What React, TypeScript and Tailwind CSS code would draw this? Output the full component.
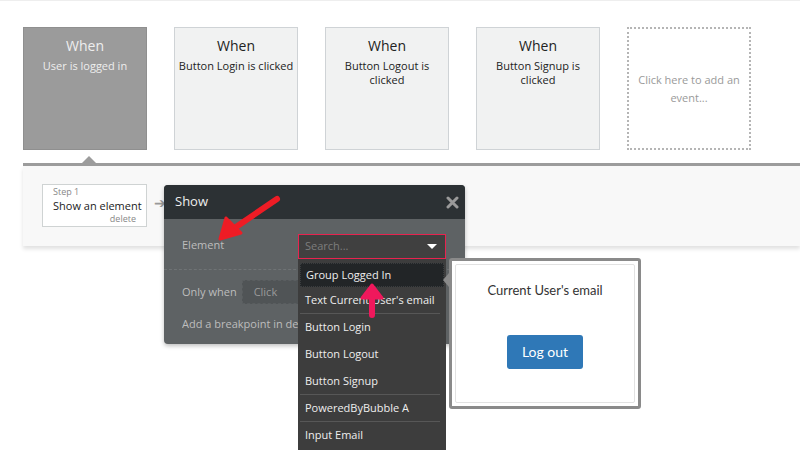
const events = [
  { title: "When", lines: ["Button Login is clicked"] },
  { title: "When", lines: ["Button Logout is", "clicked"] },
  { title: "When", lines: ["Button Signup is", "clicked"] },
];

const elements = [
  { name: "Text Current User's email", divider: true },
  { name: "Button Login" },
  { name: "Button Logout" },
  { name: "Button Signup", divider: true },
  { name: "PoweredByBubble A", divider: true },
  { name: "Input Email" },
];

export default function App() {
  return (
    <div
      className="relative w-[800px] h-[450px] overflow-hidden bg-white border-t border-[#eeeeee]"
      style={{ fontFamily: '"Open Sans", "Noto Sans", sans-serif' }}
    >
      {/* event cards */}
      <div className="flex gap-[27px] pl-[23px] pt-[26px]">
        <div className="w-[124px] h-[123px] bg-[#9b9b9b] border border-[#8f8f8f] flex flex-col items-center pt-[8px] text-[#eeeeee]">
          <div className="text-[14px] leading-[20px]">When</div>
          <div className="text-[11px] leading-[14px] mt-[3px] whitespace-nowrap">User is logged in</div>
        </div>
        {events.map((ev) => (
          <div
            key={ev.lines.join()}
            className="w-[124px] h-[123px] bg-[#f1f2f2] border border-[#cfd3d6] flex flex-col items-center pt-[8px] text-[#222222] text-center"
          >
            <div className="text-[14px] leading-[20px]">{ev.title}</div>
            <div className="text-[11px] leading-[14px] mt-[3px] whitespace-nowrap">
              {ev.lines.map((l) => (
                <div key={l}>{l}</div>
              ))}
            </div>
          </div>
        ))}
        <div className="w-[124px] h-[123px] border-2 border-dotted border-[#b5b5b5] flex items-center justify-center text-center text-[11px] leading-[18px] text-[#9a9a9a]">
          <div>
            Click here to add an
            <br />
            event...
          </div>
        </div>
      </div>

      {/* timeline */}
      <div className="relative ml-[23px] mt-[13px] h-[3px] bg-[#9c9c9c]">
        <div className="absolute left-[59px] -top-[7px] w-0 h-0 border-l-[7px] border-r-[7px] border-b-[7px] border-l-transparent border-r-transparent border-b-[#9c9c9c]" />
      </div>
      <div className="ml-[23px] h-[80px] bg-[#f8f8f8] shadow-[0_3px_4px_rgba(0,0,0,0.12)] flex items-start pt-[18px] pl-[19px]">
        <div className="w-[105px] h-[43px] bg-white border border-[#cfd3d3] px-[10px] pt-[1px] text-[#333] whitespace-nowrap">
          <div className="text-[9px] leading-[12px] text-[#888]">Step 1</div>
          <div className="text-[11px] leading-[15px] text-[#222]">Show an element</div>
          <div className="text-[9px] leading-[12px] text-[#888] text-right">delete</div>
        </div>
        <div className="ml-[7px] mt-[12px] text-[14px] leading-[14px] text-[#999]">➔</div>
      </div>

      {/* Show dialog */}
      <div className="absolute left-[164px] top-[184px] w-[301px] h-[159px] rounded-[4px] overflow-hidden bg-[#5e6264] shadow-[0_2px_4px_rgba(0,0,0,0.25)]">
        <div className="h-[34px] bg-[#2c3134] flex items-center justify-between pl-[11px] pr-[6px]">
          <span className="text-[13px] text-[#eeeeee]">Show</span>
          <svg width="13" height="13" viewBox="0 0 13 13">
            <path d="M2 2 L11 11 M11 2 L2 11" stroke="#9a9a9a" strokeWidth="3" strokeLinecap="round" />
          </svg>
        </div>
        <div className="h-[51px] flex items-center pl-[18px] pt-[2px] border-b border-dashed border-[#6f7375]">
          <span className="text-[11px] text-[#bdbdbd]">Element</span>
        </div>
        <div className="h-[43px] flex items-center pl-[18px] pt-[1px]">
          <span className="text-[11px] text-[#bdbdbd]">Only when</span>
          <div className="ml-[5px] w-[70px] h-[24px] bg-[#505456] flex items-center pl-[11px] text-[11px] text-[#9a9a9a] border border-dashed border-[#5a5e60]">
            Click
          </div>
        </div>
        <div className="pl-[18px] pt-[3px]">
          <div className="w-[116px] overflow-hidden whitespace-nowrap text-[11px] text-[#bdbdbd]">
            Add a breakpoint in debug mode
          </div>
        </div>
      </div>

      {/* search + dropdown */}
      <div className="absolute left-[298px] top-[233px] w-[148px]">
        <div className="h-[25px] bg-[#404040] border border-[#e8234f] flex items-center justify-between pl-[6px] pr-[8px]">
          <span className="text-[11px] text-[#7d7d7d]">Search...</span>
          <div className="w-0 h-0 border-l-[5px] border-r-[5px] border-t-[5px] border-l-transparent border-r-transparent border-t-white" />
        </div>
        <div className="bg-[#3d3d3d] h-[200px] px-[2px] pt-[4px]">
          <div className="h-[24px] bg-[#222527] border border-dotted border-[#3a3d3f] flex items-center pl-[5px] text-[11px] text-[#eeeeee] whitespace-nowrap">
            Group Logged In
          </div>
          {elements.map((el) => (
            <div
              key={el.name}
              className={`h-[27px] flex items-center pl-[5px] text-[11px] text-[#eeeeee] mr-[4px] whitespace-nowrap ${el.divider ? "border-b border-[#575757]" : ""}`}
            >
              {el.name}
            </div>
          ))}
        </div>
      </div>

      {/* element preview popup */}
      <div className="absolute left-[449px] top-[257px] w-[192px] h-[151px] bg-white border-[3px] border-[#8a8a8a] rounded-[3px] p-[3px]">
        <div className="absolute -left-[9px] top-[12px] w-0 h-0 border-t-[7px] border-b-[7px] border-r-[6px] border-t-transparent border-b-transparent border-r-[#8a8a8a]" />
        <div
          className="h-full border border-[#e2e2e2] rounded-[2px] flex flex-col items-center pt-[16px]"
          style={{ fontFamily: 'Lato, "Open Sans", sans-serif' }}
        >
          <div className="text-[13px] text-[#333333]">Current User's email</div>
          <div className="mt-[34px] w-[76px] h-[34px] bg-[#2f78b7] rounded-[3px] flex items-center justify-center text-[14px] text-white">
            Log out
          </div>
        </div>
      </div>

      {/* annotation arrows */}
      <svg className="absolute left-0 top-0 pointer-events-none" width="800" height="450">
        <path d="M277 198 L236 226" stroke="#ee1c25" strokeWidth="6" strokeLinecap="round" />
        <path d="M220 238 L226 217 L241 232 Z" fill="#ee1c25" stroke="#ee1c25" strokeWidth="3" strokeLinejoin="round" />
        <path d="M372 314 L372 296" stroke="#f0185c" strokeWidth="6" strokeLinecap="round" />
        <path d="M372 284 L362 297 L382 297 Z" fill="#f0185c" stroke="#f0185c" strokeWidth="3" strokeLinejoin="round" />
      </svg>
    </div>
  );
}
